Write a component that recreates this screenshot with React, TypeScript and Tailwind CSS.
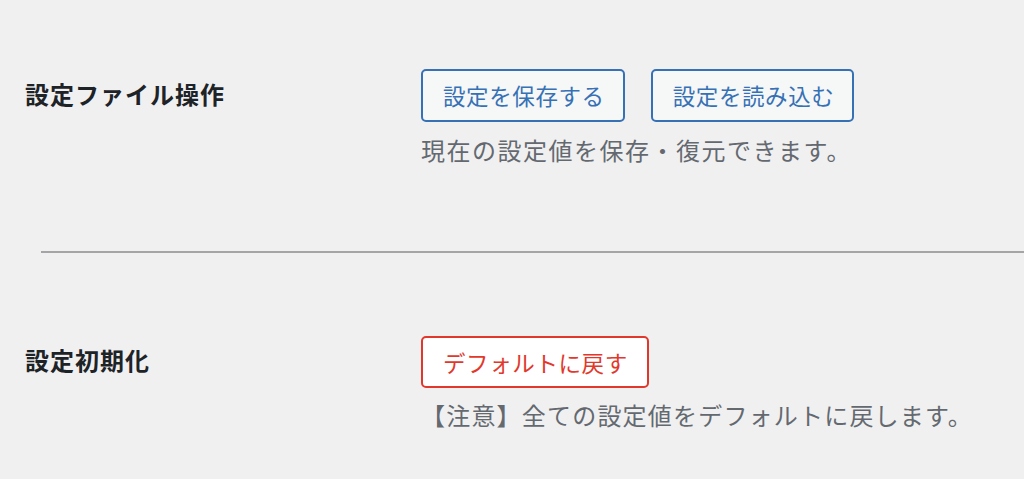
import React from 'react';

const FONT = '"Noto Sans CJK JP", "Noto Sans", sans-serif';

const App: React.FC = () => {
  return (
    <div
      className="w-full h-[479px] bg-[#f0f0f1] overflow-hidden"
      style={{ fontFamily: FONT }}
    >
      {/* Settings file section */}
      <div className="flex pl-[25px] pt-[69px]">
        <div className="w-[396px] pt-[7px] text-[24px] leading-[36px] font-bold tracking-[1px] text-[#1d2327]">
          設定ファイル操作
        </div>
        <div className="flex flex-col">
          <div className="flex gap-[26px]">
            <button className="h-[53px] pl-[20px] pr-[18px] border-2 border-[#3671b5] rounded-[5px] bg-[#f6f7f7] text-[#3671b5] text-[22.5px] tracking-[0.6px] leading-none flex items-center">
              設定を保存する
            </button>
            <button className="h-[53px] pl-[20px] pr-[18px] border-2 border-[#3671b5] rounded-[5px] bg-[#f6f7f7] text-[#3671b5] text-[22.5px] tracking-[0.6px] leading-none flex items-center">
              設定を読み込む
            </button>
          </div>
          <p className="mt-[10px] text-[24px] leading-[36px] tracking-[1.5px] text-[#646970]">
            現在の設定値を保存・復元できます。
          </p>
        </div>
      </div>

      {/* Divider */}
      <div className="mt-[83px] ml-[41px] h-[2px] bg-[#a3a5a7]" />

      {/* Reset section */}
      <div className="flex pl-[25px] pt-[83px]">
        <div className="w-[396px] pt-[6px] text-[24px] leading-[36px] font-bold tracking-[1px] text-[#1d2327]">
          設定初期化
        </div>
        <div className="flex flex-col">
          <div className="flex">
            <button className="h-[52px] pl-[20px] pr-[19px] border-2 border-[#e2382c] rounded-[5px] bg-white text-[#e2382c] text-[22.5px] tracking-[0.6px] leading-none flex items-center">
              デフォルトに戻す
            </button>
          </div>
          <p className="mt-[9px] text-[24px] leading-[36px] tracking-[1.2px] text-[#646970]">
            【注意】全ての設定値をデフォルトに戻します。
          </p>
        </div>
      </div>
    </div>
  );
};

export default App;
